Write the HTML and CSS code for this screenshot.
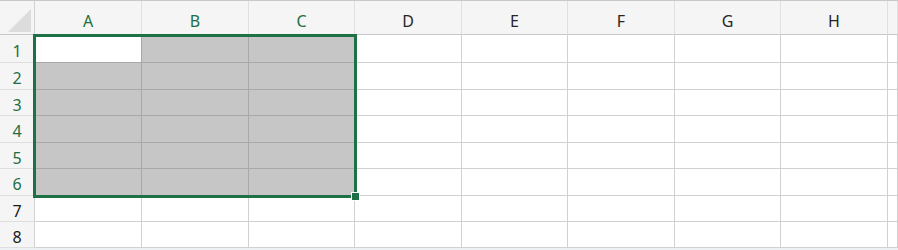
FILE: index.html
```html
<!DOCTYPE html>
<html lang="en">
<head>
  <meta charset="UTF-8">
  <title>Sheet</title>
  <link rel="stylesheet" href="styles.css">
</head>
<body>
  <div class="sheet">
    <!-- header row -->
    <div class="corner">
      <svg width="35" height="34" viewBox="0 0 35 34"><polygon points="8,31 31,31 31,8" fill="#dcdcdc"/></svg>
    </div>
    <div class="col-head sel">A</div>
    <div class="col-head sel">B</div>
    <div class="col-head sel">C</div>
    <div class="col-head">D</div>
    <div class="col-head">E</div>
    <div class="col-head">F</div>
    <div class="col-head">G</div>
    <div class="col-head">H</div>
    <div class="col-head"></div>

    <div class="row-head sel">1</div>
    <div class="cell active"></div><div class="cell fill"></div><div class="cell fill"></div>
    <div class="cell"></div><div class="cell"></div><div class="cell"></div><div class="cell"></div><div class="cell"></div><div class="cell"></div>

    <div class="row-head sel">2</div>
    <div class="cell fill"></div><div class="cell fill"></div><div class="cell fill"></div>
    <div class="cell"></div><div class="cell"></div><div class="cell"></div><div class="cell"></div><div class="cell"></div><div class="cell"></div>

    <div class="row-head sel">3</div>
    <div class="cell fill"></div><div class="cell fill"></div><div class="cell fill"></div>
    <div class="cell"></div><div class="cell"></div><div class="cell"></div><div class="cell"></div><div class="cell"></div><div class="cell"></div>

    <div class="row-head sel">4</div>
    <div class="cell fill"></div><div class="cell fill"></div><div class="cell fill"></div>
    <div class="cell"></div><div class="cell"></div><div class="cell"></div><div class="cell"></div><div class="cell"></div><div class="cell"></div>

    <div class="row-head sel">5</div>
    <div class="cell fill"></div><div class="cell fill"></div><div class="cell fill"></div>
    <div class="cell"></div><div class="cell"></div><div class="cell"></div><div class="cell"></div><div class="cell"></div><div class="cell"></div>

    <div class="row-head sel">6</div>
    <div class="cell fill"></div><div class="cell fill"></div><div class="cell fill"></div>
    <div class="cell"></div><div class="cell"></div><div class="cell"></div><div class="cell"></div><div class="cell"></div><div class="cell"></div>

    <div class="row-head">7</div>
    <div class="cell"></div><div class="cell"></div><div class="cell"></div>
    <div class="cell"></div><div class="cell"></div><div class="cell"></div><div class="cell"></div><div class="cell"></div><div class="cell"></div>

    <div class="row-head">8</div>
    <div class="cell"></div><div class="cell"></div><div class="cell"></div>
    <div class="cell"></div><div class="cell"></div><div class="cell"></div><div class="cell"></div><div class="cell"></div><div class="cell"></div>

    <!-- selection outline A1:C6 -->
    <div class="selection"><span class="handle"></span></div>
  </div>
  <div class="bottom-strip"></div>
</body>
</html>
```

FILE: styles.css
```css
body {
  margin: 0;
  background-color: #ffffff;
  font-family: "Noto Sans", "Open Sans", sans-serif;
  overflow: hidden;
}
.sheet {
  display: grid;
  grid-template-columns: 35px 107px 107px 106px 107px 106px 107px 106px 107px 1fr;
  grid-template-rows: 34px 28px 27px 26px 27px 26px 27px 26px 26px;
  border-top: 1px solid #c8c8c8;
  position: relative;
}
.corner {
  background-color: #f5f5f5;
  border-right: 1px solid #d2d2d2;
  border-bottom: 1px solid #c8c8c8;
}
.corner svg {
  display: block;
}
.col-head {
  background-color: #f5f5f5;
  border-right: 1px solid #e0e0e0;
  border-bottom: 1px solid #c8c8c8;
  color: #262626;
  font-size: 16px;
  display: flex;
  justify-content: center;
  align-items: center;
  padding-top: 6px;
}
.col-head.sel {
  color: #1e6e42;
}
.row-head {
  background-color: #f5f5f5;
  border-right: 1px solid #d2d2d2;
  border-bottom: 1px solid #dedede;
  color: #1a1a1a;
  font-size: 16px;
  display: flex;
  justify-content: center;
  align-items: center;
  padding-top: 4px;
}
.row-head.sel {
  color: #1e6e42;
}
.cell {
  border-right: 1px solid #d0d0d0;
  border-bottom: 1px solid #d0d0d0;
}
.cell.fill {
  background-color: #c6c6c6;
  border-color: #a8a8a8;
}
.cell.active {
  background-color: #ffffff;
  border-right-color: #a8a8a8;
  border-bottom-color: #a8a8a8;
}
/* overlay: absolute child of the grid, so the grid area is its containing block */
.selection {
  position: absolute;
  grid-column: 2 / 5;
  grid-row: 2 / 8;
  top: -1px;
  left: -2px;
  right: -2px;
  bottom: -2px;
  border: 3px solid #1e7145;
  z-index: 2;
}
.handle {
  position: absolute;
  right: -6px;
  bottom: -6px;
  width: 7px;
  height: 7px;
  background-color: #1e7145;
  border: 1px solid #ffffff;
}
.bottom-strip {
  height: 10px;
  background-color: #eef1f4;
}
```
